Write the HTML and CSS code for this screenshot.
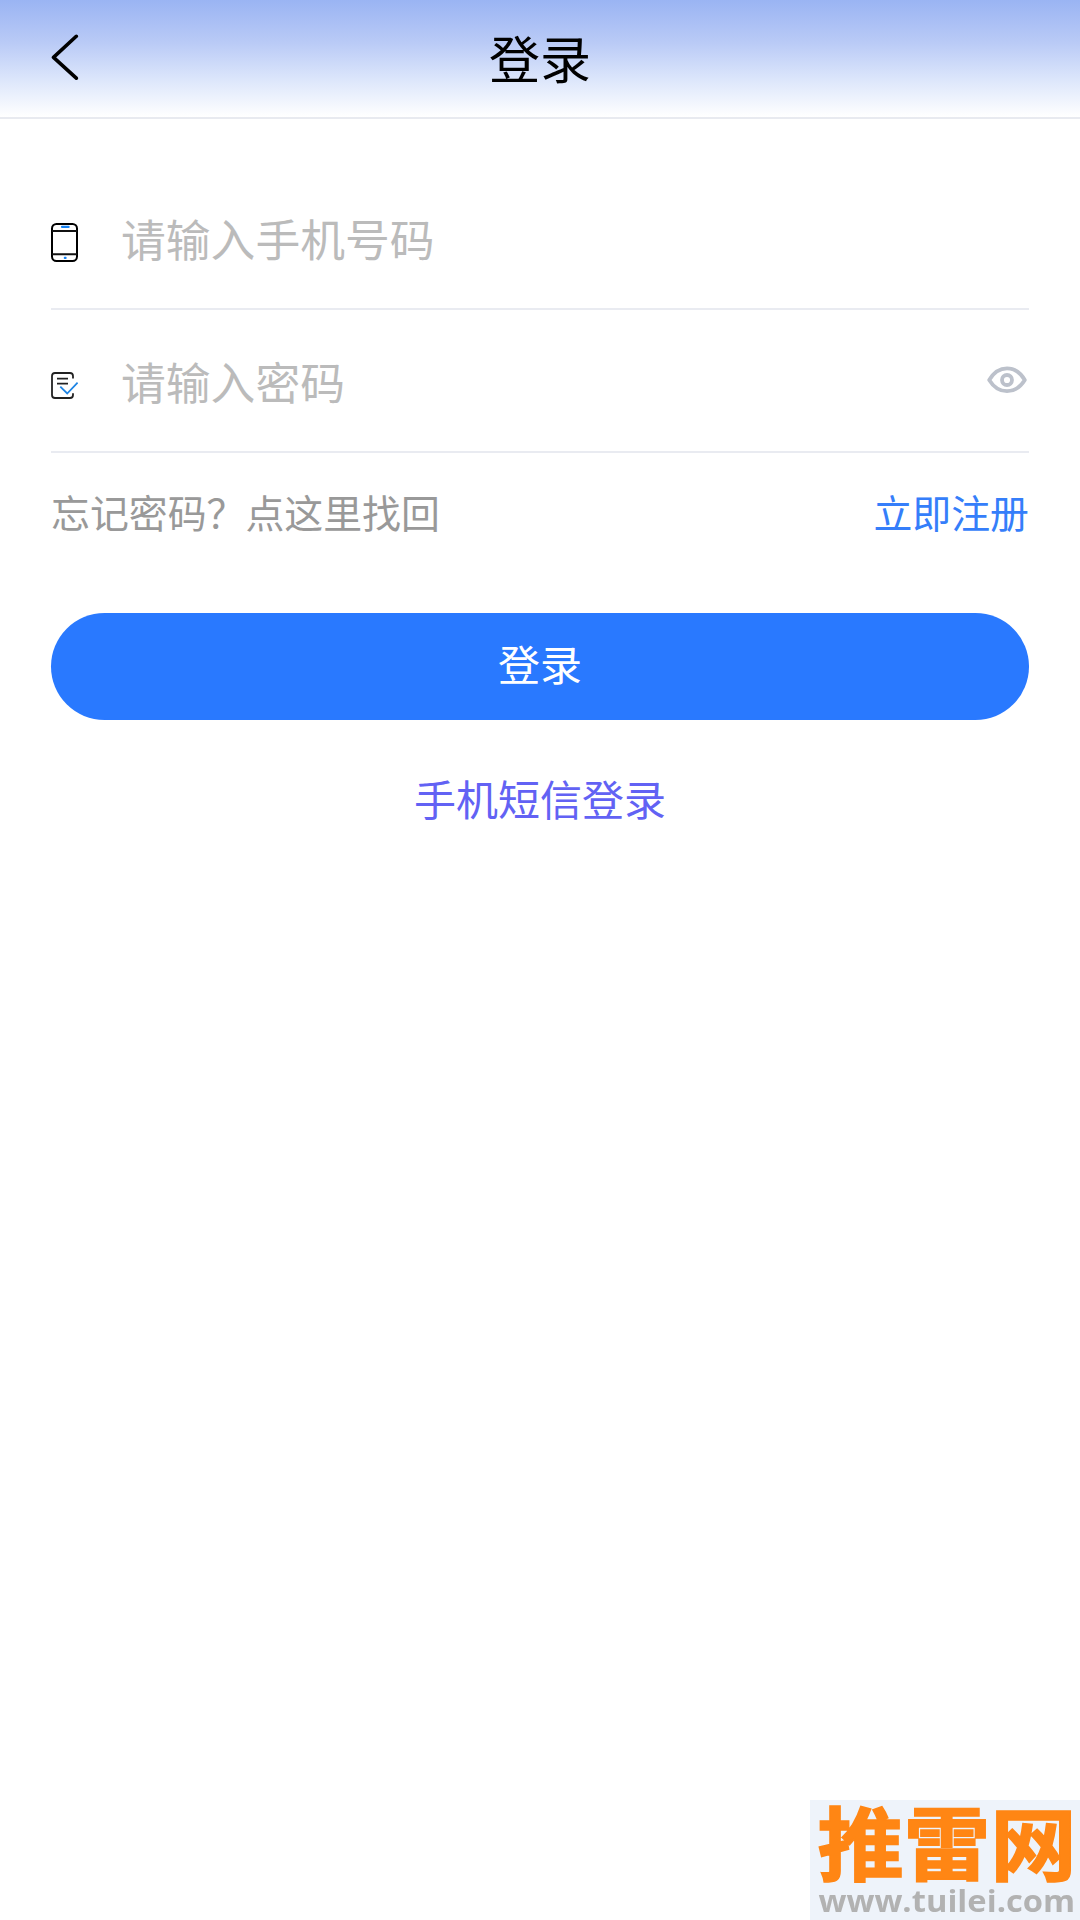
FILE: index.html
```
<!DOCTYPE html>
<html lang="zh-CN">
<head>
  <meta charset="UTF-8">
  <meta name="viewport" content="width=device-width, initial-scale=1.0">
  <title>登录</title>
  <link rel="stylesheet" href="styles.css">
</head>
<body>
  <header class="navbar">
    <a class="back" href="#" aria-label="返回">
      <svg width="28" height="48" viewBox="0 0 28 48" fill="none" stroke="#000" stroke-width="3.6" stroke-linecap="round" stroke-linejoin="round">
        <path d="M25.3 3.3L2.5 24.4L25.3 45.2"/>
      </svg>
    </a>
    <h1>登录</h1>
  </header>

  <form class="login-form">
    <div class="field">
      <svg class="field-icon" width="27" height="39" viewBox="0 0 27 39" fill="none">
        <rect x="1" y="1" width="25" height="37" rx="4.5" stroke="#000" stroke-width="2"/>
        <path d="M1 8H26M1 31.3H26" stroke="#111" stroke-width="2"/>
        <path d="M11 3.9H17.6" stroke="#1683f5" stroke-width="2.2" stroke-linecap="round"/>
        <rect x="12.8" y="33.7" width="2.8" height="2.4" rx="0.8" fill="#1683f5"/>
      </svg>
      <input type="text" placeholder="请输入手机号码">
    </div>

    <div class="field">
      <svg class="field-icon" width="27" height="27" viewBox="0 0 27 27" fill="none">
        <path d="M22 6.5V4Q22 1 19 1H4Q1 1 1 4V23Q1 26 4 26H19Q22 26 22 23V21.2" stroke="#222" stroke-width="1.8"/>
        <path d="M6 6.6H17M6 11.7H17" stroke="#222" stroke-width="1.8"/>
        <path d="M9.3 14.7L16.2 21.5L26.6 10.7" stroke="#1e84e4" stroke-width="1.8"/>
      </svg>
      <input type="text" placeholder="请输入密码">
      <svg class="eye" width="40" height="28" viewBox="0 0 40 28" fill="none" stroke="#bcc1cb" stroke-width="3.8">
        <path d="M2.2 14C7 6 13 2.4 20 2.4S33 6 37.8 14C33 21.8 27 25.2 20 25.2S7 21.8 2.2 14Z" stroke-linejoin="round"/>
        <circle cx="20" cy="14" r="5"/>
      </svg>
    </div>

    <div class="links">
      <a class="forgot" href="#">忘记密码？点这里找回</a>
      <a class="register" href="#">立即注册</a>
    </div>

    <button class="btn-login" type="button">登录</button>
    <a class="sms-login" href="#">手机短信登录</a>
  </form>

  <div class="watermark">
    <strong>推雷网</strong>
    <span>www.tuilei.com</span>
  </div>
</body>
</html>
```
FILE: styles.css
```
* {
  margin: 0;
  padding: 0;
  box-sizing: border-box;
}

body {
  min-height: 100vh;
  background-color: #fff;
  font-family: "Noto Sans CJK SC", sans-serif;
  overflow: hidden;
}

a {
  text-decoration: none;
}

.navbar {
  display: grid;
  grid-template-columns: 1fr auto 1fr;
  align-items: center;
  height: 119px;
  padding: 0 51px 4px;
  background: linear-gradient(to bottom, #9ab4f3 0%, #b9caf6 36%, #dce6fb 68%, #fff 100%);
  border-bottom: 2px solid #e8eaf0;
}

.back {
  display: flex;
}

.navbar h1 {
  font-size: 51px;
  font-weight: 400;
  line-height: 72px;
  color: #000;
}

.login-form {
  display: flex;
  flex-direction: column;
  padding: 48px 51px 0;
}

.field {
  display: flex;
  align-items: center;
  height: 143px;
  border-bottom: 2px solid #e9ebf1;
}

.field-icon {
  flex: none;
  margin-top: 9px;
}

.field input {
  flex: 1;
  min-width: 0;
  height: 66px;
  margin-left: 43px;
  border: 0;
  outline: 0;
  background: none;
  font-family: inherit;
  font-size: 44.8px;
}

.field input::placeholder {
  color: #bbb;
}

.eye {
  margin-right: 2px;
  margin-bottom: 1px;
}

.links {
  display: flex;
  justify-content: space-between;
  padding-top: 28px;
  font-size: 38.9px;
  line-height: 60px;
}

.forgot {
  color: #999;
}

.register {
  color: #357efa;
}

.btn-login {
  height: 107px;
  margin-top: 72px;
  padding-bottom: 8px;
  border: 0;
  border-radius: 56px;
  background-color: #2979ff;
  color: #fff;
  font-family: inherit;
  font-size: 42px;
}

.sms-login {
  align-self: center;
  margin-top: 48px;
  font-size: 42px;
  line-height: 60px;
  color: #6262f4;
}

/* site badge, pinned to the bottom right corner */
.watermark {
  position: fixed;
  right: 0;
  bottom: 0;
  display: flex;
  flex-direction: column;
  align-items: center;
  width: 270px;
  height: 120px;
  padding-left: 3px;
  background-color: #eef3fa;
  white-space: nowrap;
}

.watermark strong {
  margin-top: -5px;
  font-size: 80px;
  font-weight: 700;
  line-height: 88px;
  color: #ff8614;
  -webkit-text-stroke: 1.5px #ff8614;
  transform: scaleX(1.08);
}

.watermark span {
  margin-top: 4px;
  font-family: "Open Sans", sans-serif;
  font-size: 30px;
  font-weight: 700;
  line-height: 28px;
  color: #b2b2b2;
  transform: scaleX(1.09);
}
```
